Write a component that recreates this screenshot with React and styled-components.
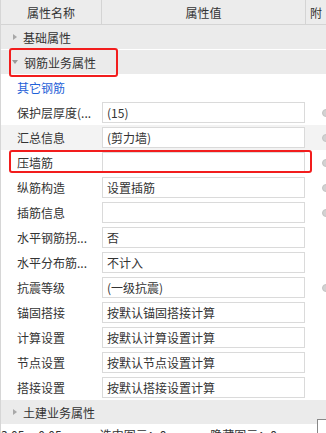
import React from 'react';
import styled, { createGlobalStyle } from 'styled-components';

const Global = createGlobalStyle`
  html, body { margin: 0; padding: 0; background: #ffffff; }
  body {
    font-family: "Microsoft YaHei", "Noto Sans CJK SC", "Noto Sans", sans-serif;
    font-size: 12px;
    color: #333333;
  }
`;

const Panel = styled.div`
  position: relative;
  width: 326px;
  height: 433px;
  overflow: hidden;
  background: #ffffff;
  border-left: 1px solid #d6d6d6;
  box-sizing: border-box;
`;

const Header = styled.div`
  display: grid;
  grid-template-columns: 101px 204px 1fr;
  height: 24px;
  background: #ececec;
  border-bottom: 1px solid #d4d4d4;
`;

const HeadCell = styled.div`
  display: flex;
  align-items: center;
  justify-content: ${p => (p.left ? 'flex-start' : 'center')};
  padding-left: ${p => (p.left ? '4px' : '0')};
  border-right: ${p => (p.last ? 'none' : '1px solid #d4d4d4')};
  white-space: nowrap;
  overflow: hidden;
  font-size: 12px;
  color: #333;
`;

const Group = styled.div`
  display: flex;
  align-items: center;
  height: 24px;
  background: #ebebeb;
  border-bottom: 1px solid #ffffff;
  padding-left: 10px;
  gap: 6px;
  font-size: 12px;
  color: #333;
`;

const Arrow = styled.span`
  width: 0;
  height: 0;
  ${p =>
    p.open
      ? `border-left: 3px solid transparent; border-right: 3px solid transparent; border-top: 4px solid #9a9a9a; margin-left: 1px;`
      : `border-top: 3px solid transparent; border-bottom: 3px solid transparent; border-left: 4px solid #a8a8a8; margin-left: 2px;`}
`;

const Row = styled.div`
  display: grid;
  grid-template-columns: 101px 203px 1fr;
  align-items: center;
  height: 25px;
  background: ${p => (p.hover ? '#f3f3f3' : '#ffffff')};
`;

const Label = styled.div`
  padding-left: 16px;
  white-space: nowrap;
  overflow: hidden;
  color: ${p => (p.link ? '#1f62d8' : '#333')};
`;

const ValueBox = styled.div`
  height: 19px;
  border: 1px solid #dadada;
  background: #ffffff;
  display: flex;
  align-items: center;
  padding-left: 4px;
  white-space: nowrap;
  overflow: hidden;
  color: #333;
`;

const Extra = styled.div`
  display: flex;
  align-items: center;
  padding-left: 17px;
`;

const Dot = styled.span`
  width: 8px;
  height: 8px;
  border-radius: 50%;
  background: #d2d2d2;
  border: 1px solid #c4c4c4;
  box-sizing: border-box;
`;

const Status = styled.div`
  display: flex;
  align-items: center;
  height: 16px;
  margin-top: 1px;
  font-size: 12px;
  color: #333;
  white-space: nowrap;
`;

const StatusItem = styled.span`
  margin-right: ${p => p.gap}px;
`;

const CornerBox = styled.span`
  position: absolute;
  right: 0;
  bottom: 0;
  width: 8px;
  height: 13px;
  border: 1px solid #888;
  border-right: none;
  border-bottom: none;
  background: #fff;
`;

const Mark = styled.div`
  position: absolute;
  left: ${p => p.x}px;
  top: ${p => p.y}px;
  width: ${p => p.w}px;
  height: ${p => p.h}px;
  border: 2px solid #f21d1d;
  border-radius: 3px;
  box-sizing: border-box;
  pointer-events: none;
`;

const rows = [
  { name: '其它钢筋', value: null, link: true },
  { name: '保护层厚度(...', value: '(15)', dot: true },
  { name: '汇总信息', value: '(剪力墙)', dot: true, hover: true },
  { name: '压墙筋', value: '', dot: true },
  { name: '纵筋构造', value: '设置插筋', dot: true },
  { name: '插筋信息', value: '', dot: true },
  { name: '水平钢筋拐...', value: '否' },
  { name: '水平分布筋...', value: '不计入' },
  { name: '抗震等级', value: '(一级抗震)', dot: true },
  { name: '锚固搭接', value: '按默认锚固搭接计算' },
  { name: '计算设置', value: '按默认计算设置计算' },
  { name: '节点设置', value: '按默认节点设置计算' },
  { name: '搭接设置', value: '按默认搭接设置计算' },
];

export default function App() {
  return (
    <Panel>
      <Global />
      <Header>
        <HeadCell>属性名称</HeadCell>
        <HeadCell>属性值</HeadCell>
        <HeadCell left last>附</HeadCell>
      </Header>
      <Group><Arrow />基础属性</Group>
      <Group><Arrow open />钢筋业务属性</Group>
      {rows.map(r => (
        <Row key={r.name} hover={r.hover}>
          <Label link={r.link}>{r.name}</Label>
          {r.value === null ? <div /> : <ValueBox>{r.value}</ValueBox>}
          <Extra>{r.dot && <Dot />}</Extra>
        </Row>
      ))}
      <Group><Arrow />土建业务属性</Group>
      <Status>
        <StatusItem gap={14}>3.05</StatusItem>
        <StatusItem gap={38}>0.05</StatusItem>
        <StatusItem gap={44}>选中图元：0</StatusItem>
        <StatusItem gap={0}>隐藏图元：0</StatusItem>
      </Status>
      <CornerBox />
      <Mark x={8} y={48} w={109} h={29} />
      <Mark x={8} y={150} w={303} h={23} />
    </Panel>
  );
}
